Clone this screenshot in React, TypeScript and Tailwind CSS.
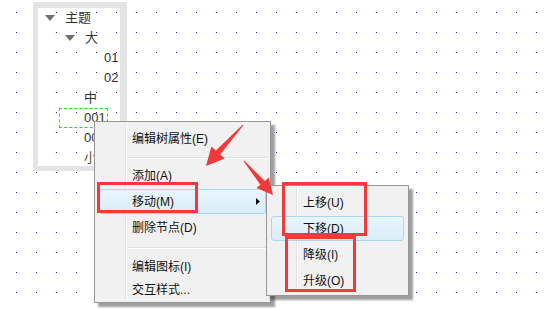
import type { ReactNode } from 'react';

const font = 'font-["Liberation_Sans","Noto_Sans_CJK_SC",sans-serif]';

function Caret() {
  return (
    <svg width="10" height="6" viewBox="0 0 10 6" className="shrink-0">
      <path d="M0 0 L10 0 L5 6 Z" fill="#6f6f6f" />
    </svg>
  );
}

function TreeRow({ pl, children }: { pl: string; children: ReactNode }) {
  return <div className={`flex h-5 items-center gap-[10px] ${pl}`}>{children}</div>;
}

function MenuItem({
  label,
  h = 'h-[26px]',
  hot = false,
  sub = false,
  pad = 'pl-[37px]',
}: {
  label: string;
  h?: string;
  hot?: boolean;
  sub?: boolean;
  pad?: string;
}) {
  return (
    <div className={`relative flex items-center ${h} ${pad}`}>
      {hot && (
        <div className="absolute inset-x-[4px] top-0 bottom-[1px] rounded-[3px] border border-[#a9d9f1] bg-[linear-gradient(#eaf5fc,#d9edf9)]" />
      )}
      <span className="relative text-[12px] text-[#111]">{label}</span>
      {sub && (
        <svg width="4" height="7" viewBox="0 0 4 7" className="absolute right-[10px] top-[9px]">
          <path d="M0 0 L4 3.5 L0 7 Z" fill="#111" />
        </svg>
      )}
    </div>
  );
}

function Sep({ h }: { h: string }) {
  return (
    <div className={`flex ${h} items-center pl-[33px] pr-[3px]`}>
      <div className="h-[2px] w-full border-t border-[#e0e0e0] border-b border-b-white" />
    </div>
  );
}

export default function App() {
  return (
    <div className={`relative h-[309px] w-[551px] overflow-hidden bg-white ${font}`}>
      {/* dotted canvas */}
      <svg className="absolute inset-0" width="551" height="309">
        <defs>
          <pattern id="dots" width="20" height="20" patternUnits="userSpaceOnUse">
            <rect x="16" y="12" width="1" height="1" fill="#1a1aff" />
          </pattern>
        </defs>
        <rect width="551" height="309" fill="url(#dots)" />
      </svg>

      {/* tree panel */}
      <div className="relative ml-[33px] mt-[2px] h-[169px] w-[94px] overflow-hidden border-t-[6px] border-r-[7px] border-b-[5px] border-l-[5px] border-[#e4e4e4] text-[13px] text-[#333]">
        <TreeRow pl="pl-[7px]">
          <Caret />
          <span>主题</span>
        </TreeRow>
        <TreeRow pl="pl-[27px]">
          <Caret />
          <span>大</span>
        </TreeRow>
        <TreeRow pl="pl-[66px]">
          <span>01</span>
        </TreeRow>
        <TreeRow pl="pl-[66px]">
          <span>02</span>
        </TreeRow>
        <TreeRow pl="pl-[46px]">
          <span>中</span>
        </TreeRow>
        <div className="flex h-5 items-center pl-[21px]">
          <div className="flex h-[20px] w-[49px] items-center border border-dashed border-[#22dd22] pl-[24px]">
            001
          </div>
        </div>
        <TreeRow pl="pl-[46px]">
          <span>002</span>
        </TreeRow>
        <TreeRow pl="pl-[46px]">
          <span className="text-[#6b4a30]">小</span>
        </TreeRow>
      </div>

      {/* context menu */}
      <div className="absolute left-[94px] top-[121px] h-[182px] w-[177px] border border-[#979797] bg-[#f1f1f1] pt-[4px] shadow-[4px_4px_2px_rgba(0,0,0,0.38)]">
        <div className="absolute left-[30px] top-[2px] bottom-[2px] w-[2px] border-l border-[#e2e3e3] border-r border-r-white" />
        <MenuItem label="编辑树属性(E)" />
        <Sep h="h-[11px]" />
        <MenuItem label="添加(A)" />
        <MenuItem label="移动(M)" hot sub />
        <MenuItem label="删除节点(D)" />
        <Sep h="h-[13px]" />
        <MenuItem label="编辑图标(I)" h="h-[25px]" />
        <MenuItem label="交互样式..." h="h-[22px]" />
      </div>

      {/* sub menu */}
      <div className="absolute left-[266px] top-[185px] h-[111px] w-[143px] border border-[#979797] bg-[#f1f1f1] pt-[4px] shadow-[4px_4px_2px_rgba(0,0,0,0.38)]">
        <div className="absolute left-[29px] top-[2px] bottom-[2px] w-[2px] border-l border-[#e2e3e3] border-r border-r-white" />
        <MenuItem label="上移(U)" pad="pl-[36px]" />
        <MenuItem label="下移(D)" pad="pl-[36px]" hot />
        <MenuItem label="降级(I)" pad="pl-[36px]" />
        <MenuItem label="升级(O)" pad="pl-[36px]" />
      </div>

      {/* annotations */}
      <div className="absolute left-[97px] top-[182px] h-[31px] w-[101px] border-[3px] border-[#f23a3a]" />
      <div className="absolute left-[282px] top-[182px] h-[54px] w-[85px] border-[3px] border-[#f23a3a]" />
      <div className="absolute left-[285px] top-[236px] h-[56px] w-[71px] border-[3px] border-[#f23a3a]" />

      <svg className="pointer-events-none absolute inset-0" width="551" height="309">
        <polygon
          points="243.4,125.3 220.3,154.6 224.8,158.6 206,166 211.4,146.6 215.9,150.6 242.6,124.7"
          fill="#f23a3a"
        />
        <polygon
          points="243.6,161.3 260.3,184.7 256.5,188 273,195 268.7,177.6 264.9,180.9 244.4,160.7"
          fill="#f23a3a"
        />
      </svg>
    </div>
  );
}
